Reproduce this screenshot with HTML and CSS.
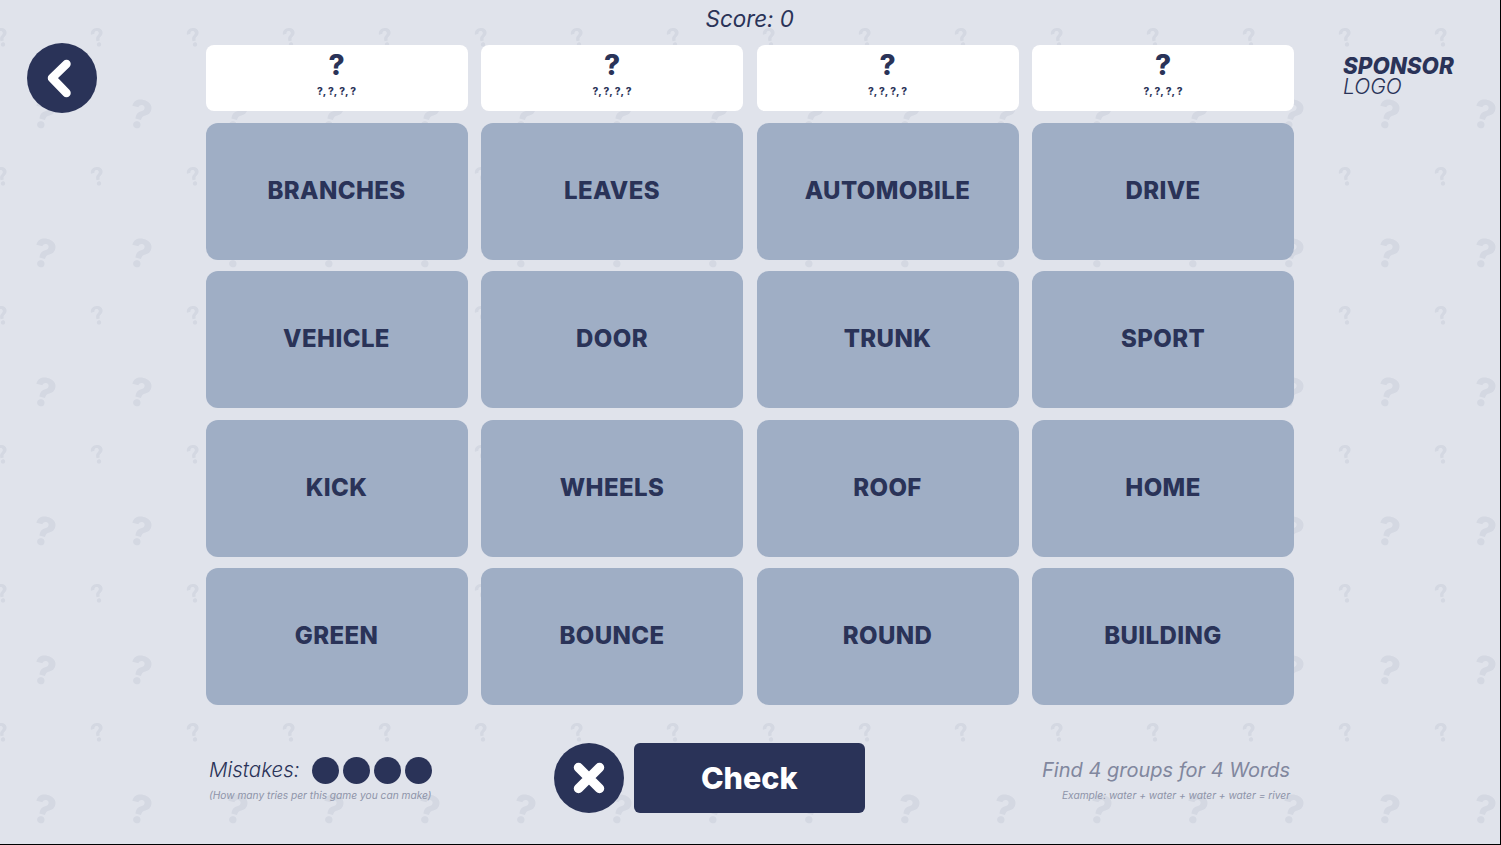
FILE: index.html
```html
<!DOCTYPE html>
<html lang="en">
  <head>
    <meta charset="UTF-8" />
    <meta name="viewport" content="width=device-width, initial-scale=1.0" />
    <title>Word Groups</title>
    <link rel="stylesheet" href="styles.css">
  </head>
  <body>
    <div class="game">
      <div class="side-left">
        <button class="round-btn" aria-label="Back">
          <svg width="70" height="70" viewBox="0 0 70 70">
            <path d="M39.5 21 L25 35 L39.5 50" fill="none" stroke="#fff" stroke-width="8.5" stroke-linecap="round" stroke-linejoin="round" />
          </svg>
        </button>
      </div>

      <div class="center">
        <h2 class="score">Score: 0</h2>

        <div class="groups">
          <div class="group"><span class="group-title">?</span><span class="group-words">?, ?, ?, ?</span></div>
          <div class="group"><span class="group-title">?</span><span class="group-words">?, ?, ?, ?</span></div>
          <div class="group"><span class="group-title">?</span><span class="group-words">?, ?, ?, ?</span></div>
          <div class="group"><span class="group-title">?</span><span class="group-words">?, ?, ?, ?</span></div>
        </div>

        <div class="board">
          <button class="word">BRANCHES</button>
          <button class="word">LEAVES</button>
          <button class="word">AUTOMOBILE</button>
          <button class="word">DRIVE</button>
          <button class="word">VEHICLE</button>
          <button class="word">DOOR</button>
          <button class="word">TRUNK</button>
          <button class="word">SPORT</button>
          <button class="word">KICK</button>
          <button class="word">WHEELS</button>
          <button class="word">ROOF</button>
          <button class="word">HOME</button>
          <button class="word">GREEN</button>
          <button class="word">BOUNCE</button>
          <button class="word">ROUND</button>
          <button class="word">BUILDING</button>
        </div>

        <div class="footer">
          <div class="mistakes">
            <div class="mistakes-row">
              <span class="mistakes-label">Mistakes:</span>
              <span class="dots">
                <i class="dot"></i><i class="dot"></i><i class="dot"></i><i class="dot"></i>
              </span>
            </div>
            <p class="note">(How many tries per this game you can make)</p>
          </div>

          <div class="actions">
            <button class="round-btn" aria-label="Clear">
              <svg width="70" height="70" viewBox="0 0 70 70">
                <path d="M24.5 24.5 L45.5 45.5 M45.5 24.5 L24.5 45.5" fill="none" stroke="#fff" stroke-width="9.5" stroke-linecap="round" />
              </svg>
            </button>
            <button class="check">Check</button>
          </div>

          <div class="hint">
            <p class="hint-title">Find 4 groups for 4 Words</p>
            <p class="note">Example: water + water + water + water = river</p>
          </div>
        </div>
      </div>

      <div class="sponsor">
        <strong>SPONSOR</strong>
        <span>LOGO</span>
      </div>
    </div>
  </body>
</html>
```

FILE: styles.css
```css
html {
  background: #000;
}
body {
  margin: 0;
  width: 1500px;
  height: 844px;
  overflow: hidden;
  color: #2a3358;
  font-family: Inter, "Noto Sans", sans-serif;
  background-color: #e0e3eb;
  background-image: url("data:image/svg+xml,%3Csvg xmlns='http://www.w3.org/2000/svg' width='96' height='139'%3E%3Cg font-family='Inter,sans-serif' font-weight='800' text-anchor='middle' fill='%23d4d8e2'%3E%3Ctext transform='translate(4 46) rotate(-14)' font-size='25' font-weight='700'%3E%3F%3C/text%3E%3Ctext transform='translate(100 46) rotate(-14)' font-size='25' font-weight='700'%3E%3F%3C/text%3E%3Ctext transform='translate(41 128) rotate(14)' font-size='39'%3E%3F%3C/text%3E%3C/g%3E%3C/svg%3E");
}
.game {
  display: grid;
  grid-template-columns: 205.5px 1088.5px 1fr;
  height: 100%;
}
button {
  font-family: inherit;
  border: none;
  cursor: pointer;
}
.side-left {
  padding: 43px 0 0 27px;
}
.round-btn {
  display: block;
  width: 70px;
  height: 70px;
  padding: 0;
  border-radius: 50%;
  background: #2a3358;
}
.round-btn svg {
  display: block;
}

.center {
  display: flex;
  flex-direction: column;
}
.score {
  height: 45px;
  margin: 0;
  font-size: 22.4px;
  line-height: 38px;
  font-weight: 400;
  font-style: italic;
  text-align: center;
}

.groups {
  display: grid;
  grid-template-columns: repeat(4, 1fr);
  column-gap: 13.5px;
}
.group {
  display: flex;
  flex-direction: column;
  align-items: center;
  height: 66px;
  background: #fff;
  border-radius: 8px;
}
.group-title {
  margin-top: 3px;
  font-size: 28px;
  line-height: 34px;
  font-weight: 800;
}
.group-words {
  margin-top: 2px;
  font-size: 10px;
  line-height: 14px;
  font-weight: 800;
}

.board {
  display: grid;
  grid-template-columns: repeat(4, 1fr);
  grid-auto-rows: 137px;
  gap: 11.4px 13.5px;
  margin-top: 12px;
}
.word {
  padding: 0 0 2px;
  background: #9faec5;
  border-radius: 12px;
  color: #2a3358;
  font-size: 24px;
  font-weight: 800;
  letter-spacing: 0.4px;
}

.footer {
  display: grid;
  grid-template-columns: 348.5px 311px 1fr;
  margin-top: 38px;
}
.mistakes {
  padding: 12px 0 0 3.5px;
}
.mistakes-row {
  display: flex;
  align-items: center;
}
.mistakes-label {
  font-size: 20.5px;
  line-height: 30px;
  font-style: italic;
  font-weight: 300;
}
.dots {
  display: flex;
  gap: 4.2px;
  margin-left: 12px;
}
.dot {
  width: 27px;
  height: 27px;
  border-radius: 50%;
  background: #2a3358;
}
.note {
  margin: 3px 0 0;
  font-size: 10.2px;
  line-height: 14px;
  font-style: italic;
  color: #8e94a9;
}

.actions {
  display: flex;
  gap: 9.5px;
}
.check {
  width: 232px;
  height: 70px;
  padding: 0 0 2px;
  background: #2a3358;
  border-radius: 6px;
  color: #fff;
  font-size: 30.5px;
  font-weight: 800;
}

.hint {
  padding: 12px 4px 0 0;
  text-align: right;
}
.hint-title {
  margin: 0;
  font-size: 20px;
  line-height: 30px;
  font-style: italic;
  font-weight: 400;
  color: #81879e;
}

.sponsor {
  display: flex;
  flex-direction: column;
  gap: 1px;
  padding: 56px 0 0 49px;
  font-style: italic;
}
.sponsor strong {
  font-size: 22.4px;
  line-height: 20px;
  font-weight: 800;
}
.sponsor span {
  font-size: 21px;
  line-height: 20px;
  font-weight: 300;
}
```
